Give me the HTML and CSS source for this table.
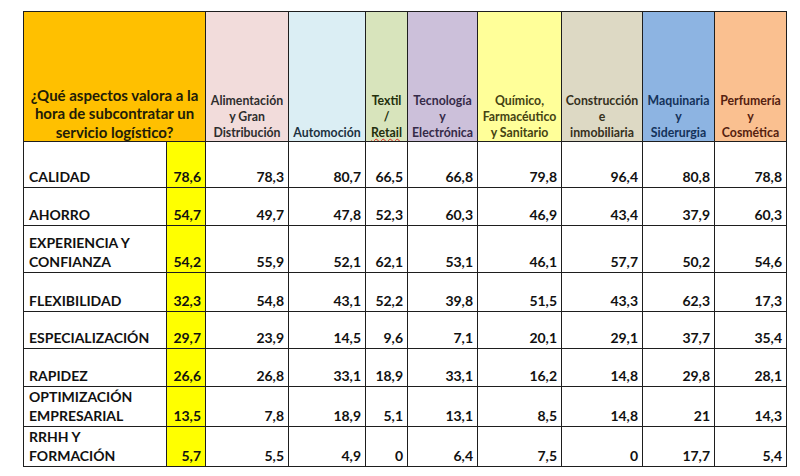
FILE: index.html
```html
<!DOCTYPE html>
<html lang="es">
<head>
<meta charset="utf-8">
<title>Subcontratación logística</title>
<link rel="stylesheet" href="styles.css">
</head>
<body>
<div class="page">
<table class="sheet">
  <colgroup>
    <col class="c-label"><col class="c-total"><col class="c-ali"><col class="c-auto"><col class="c-tex"><col class="c-tec"><col class="c-qui"><col class="c-con"><col class="c-maq"><col class="c-per">
  </colgroup>
  <thead>
    <tr class="head">
      <th colspan="2" class="h-main">¿Qué aspectos valora a la hora de subcontratar un servicio logístico?</th>
      <th class="h h-ali">Alimentación<br>y Gran<br>Distribución</th>
      <th class="h h-auto">Automoción</th>
      <th class="h h-tex">Textil<br>/<br><span class="spell">Retail</span></th>
      <th class="h h-tec">Tecnología<br>y<br>Electrónica</th>
      <th class="h h-qui">Químico,<br>Farmacéutico<br>y Sanitario</th>
      <th class="h h-con">Construcción<br>e<br>inmobiliaria</th>
      <th class="h h-maq">Maquinaria<br>y<br>Siderurgia</th>
      <th class="h h-per">Perfumería<br>y<br>Cosmética</th>
    </tr>
  </thead>
  <tbody>
    <tr class="r1"><td class="lab">CALIDAD</td><td class="tot">78,6</td><td>78,3</td><td>80,7</td><td>66,5</td><td>66,8</td><td>79,8</td><td>96,4</td><td>80,8</td><td>78,8</td></tr>
    <tr class="r2"><td class="lab">AHORRO</td><td class="tot">54,7</td><td>49,7</td><td>47,8</td><td>52,3</td><td>60,3</td><td>46,9</td><td>43,4</td><td>37,9</td><td>60,3</td></tr>
    <tr class="r3"><td class="lab">EXPERIENCIA Y<br>CONFIANZA</td><td class="tot">54,2</td><td>55,9</td><td>52,1</td><td>62,1</td><td>53,1</td><td>46,1</td><td>57,7</td><td>50,2</td><td>54,6</td></tr>
    <tr class="r4"><td class="lab">FLEXIBILIDAD</td><td class="tot">32,3</td><td>54,8</td><td>43,1</td><td>52,2</td><td>39,8</td><td>51,5</td><td>43,3</td><td>62,3</td><td>17,3</td></tr>
    <tr class="r5"><td class="lab">ESPECIALIZACIÓN</td><td class="tot">29,7</td><td>23,9</td><td>14,5</td><td>9,6</td><td>7,1</td><td>20,1</td><td>29,1</td><td>37,7</td><td>35,4</td></tr>
    <tr class="r6"><td class="lab">RAPIDEZ</td><td class="tot">26,6</td><td>26,8</td><td>33,1</td><td>18,9</td><td>33,1</td><td>16,2</td><td>14,8</td><td>29,8</td><td>28,1</td></tr>
    <tr class="r7"><td class="lab">OPTIMIZACIÓN<br>EMPRESARIAL</td><td class="tot">13,5</td><td>7,8</td><td>18,9</td><td>5,1</td><td>13,1</td><td>8,5</td><td>14,8</td><td>21</td><td>14,3</td></tr>
    <tr class="r8"><td class="lab">RRHH Y<br>FORMACIÓN</td><td class="tot">5,7</td><td>5,5</td><td>4,9</td><td>0</td><td>6,4</td><td>7,5</td><td>0</td><td>17,7</td><td>5,4</td></tr>
  </tbody>
</table>
</div>
</body>
</html>
```

FILE: styles.css
```css
html, body {
  margin: 0;
  padding: 0;
  background: #ffffff;
}

.page {
  padding: 11px 0 0 23px;
}

.sheet {
  border-collapse: collapse;
  table-layout: fixed;
  width: 764px;
  font-family: Lato, "Open Sans", sans-serif;
  font-weight: 700;
  color: #111111;
}

.c-label { width: 143px; }
.c-total { width: 39px; }
.c-ali { width: 83px; }
.c-auto { width: 77px; }
.c-tex { width: 42px; }
.c-tec { width: 70px; }
.c-qui { width: 84px; }
.c-con { width: 81px; }
.c-maq { width: 72px; }
.c-per { width: 72px; }

.sheet th,
.sheet td {
  border: 1px solid #1e1e1e;
  padding: 0 4px 1px 4px;
  vertical-align: bottom;
  overflow: hidden;
  white-space: nowrap;
}

.head { height: 130px; }

.sheet .h-main {
  background: #ffc000;
  font-size: 15px;
  line-height: 18.5px;
  white-space: normal;
  text-align: center;
  color: #221c08;
  padding: 0 3px 0 3px;
}

.sheet .h {
  font-size: 12.3px;
  line-height: 16px;
  text-align: center;
  padding: 0 1px 0 1px;
}

.h-ali { background: #f2dcdb; color: #2e2e2e; }
.h-auto { background: #dbeef4; color: #1c3140; }
.h-tex { background: #d8e4bc; color: #232f0c; }
.h-tec { background: #ccc0da; color: #352a48; }
.h-qui { background: #ffff99; color: #454312; }
.h-con { background: #ddd9c4; color: #35301c; }
.h-maq { background: #8db4e2; color: #14325a; }
.h-per { background: #fac090; color: #55210f; }

.spell {
  text-decoration: underline wavy #e0201c;
  text-decoration-thickness: 1px;
  text-underline-offset: 1px;
}

.sheet td {
  font-size: 14px;
  line-height: 19px;
  text-align: right;
}

.sheet td.lab {
  text-align: left;
  padding-left: 5px;
}

.sheet td.tot {
  background: #ffff00;
}

.r1 { height: 46px; }
.r2 { height: 38px; }
.r3 { height: 47px; }
.r4 { height: 39px; }
.r5 { height: 37px; }
.r6 { height: 38px; }
.r7 { height: 39px; }
.r8 { height: 39px; }
```
